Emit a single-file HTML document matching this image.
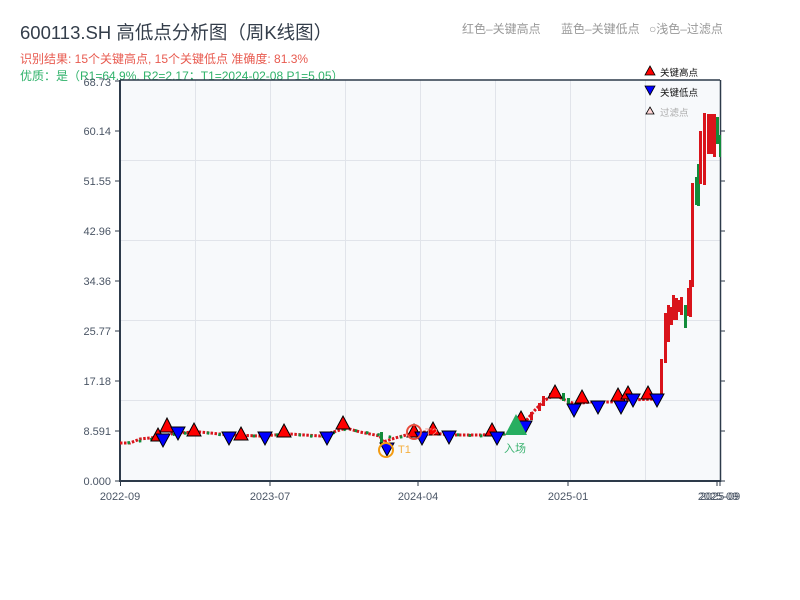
<!DOCTYPE html>
<html><head><meta charset="utf-8"><style>
html,body{margin:0;padding:0;background:#fff;width:800px;height:600px;overflow:hidden}
svg{display:block;font-family:"Liberation Sans","Noto Sans CJK SC",sans-serif}
</style></head><body>
<svg width="800" height="600" viewBox="0 0 800 600" xmlns="http://www.w3.org/2000/svg">
<text x="20" y="39" font-size="18.5" fill="#333d4a">600113.SH 高低点分析图（周K线图）</text>
<text x="20" y="63" font-size="12" fill="#e85a4f">识别结果: 15个关键高点, 15个关键低点  准确度: 81.3%</text>
<text x="20" y="80" font-size="12" fill="#2fb26a">优质：是（R1=64.9%, R2=2.17；T1=2024-02-08 P1=5.05）</text>
<text x="462" y="33" font-size="12" fill="#999">红色–关键高点</text>
<text x="561" y="33" font-size="12" fill="#999">蓝色–关键低点</text>
<text x="649" y="33" font-size="12" fill="#999">○浅色–过滤点</text>

<rect x="120" y="80" width="600" height="401" fill="#f7f9fb"/>
<g stroke="#e1e4ea" stroke-width="1">
<line x1="120" y1="160.5" x2="720" y2="160.5"/><line x1="120" y1="240.5" x2="720" y2="240.5"/>
<line x1="120" y1="320.5" x2="720" y2="320.5"/><line x1="120" y1="400.5" x2="720" y2="400.5"/>
<line x1="195.5" y1="80" x2="195.5" y2="481"/><line x1="270.5" y1="80" x2="270.5" y2="481"/>
<line x1="345.5" y1="80" x2="345.5" y2="481"/><line x1="420.5" y1="80" x2="420.5" y2="481"/>
<line x1="495.5" y1="80" x2="495.5" y2="481"/><line x1="570.5" y1="80" x2="570.5" y2="481"/>
<line x1="645.5" y1="80" x2="645.5" y2="481"/>
</g>
<g stroke="#2d3a4a" stroke-width="2" fill="none">
<line x1="120" y1="80" x2="720" y2="80" stroke-width="1.5"/>
<line x1="120" y1="80" x2="120" y2="482"/>
<line x1="119" y1="481" x2="721" y2="481"/>
<line x1="720.5" y1="80" x2="720.5" y2="482" stroke-width="1.5"/>
</g>
<g stroke="#2d3a4a" stroke-width="1">
<line x1="115" y1="81" x2="120" y2="81"/><line x1="115" y1="131" x2="120" y2="131"/><line x1="115" y1="181" x2="120" y2="181"/>
<line x1="115" y1="231" x2="120" y2="231"/><line x1="115" y1="281" x2="120" y2="281"/><line x1="115" y1="331" x2="120" y2="331"/>
<line x1="115" y1="381" x2="120" y2="381"/><line x1="115" y1="431" x2="120" y2="431"/><line x1="115" y1="481" x2="120" y2="481"/>
<line x1="720" y1="131" x2="725" y2="131"/><line x1="720" y1="181" x2="725" y2="181"/><line x1="720" y1="231" x2="725" y2="231"/>
<line x1="720" y1="281" x2="725" y2="281"/><line x1="720" y1="331" x2="725" y2="331"/><line x1="720" y1="381" x2="725" y2="381"/>
<line x1="720" y1="431" x2="725" y2="431"/><line x1="720" y1="481" x2="725" y2="481"/>
<line x1="120.5" y1="481" x2="120.5" y2="486"/><line x1="270" y1="481" x2="270" y2="486"/><line x1="418" y1="481" x2="418" y2="486"/>
<line x1="568" y1="481" x2="568" y2="486"/><line x1="717" y1="481" x2="717" y2="486"/><line x1="720" y1="481" x2="720" y2="486"/>
</g>
<g font-size="11" fill="#4a5565" text-anchor="end">
<text x="111" y="86">68.73</text><text x="111" y="135">60.14</text><text x="111" y="185">51.55</text>
<text x="111" y="235">42.96</text><text x="111" y="285">34.36</text><text x="111" y="335">25.77</text>
<text x="111" y="385">17.18</text><text x="111" y="435">8.591</text><text x="111" y="485">0.000</text>
</g>
<g font-size="11" fill="#4a5565" text-anchor="middle">
<text x="120" y="500">2022-09</text><text x="270" y="500">2023-07</text><text x="418" y="500">2024-04</text>
<text x="568" y="500">2025-01</text><text x="718" y="500">2025-09</text><text x="720" y="500">2025-09</text>
</g>

<path d="M120 443 L130 443 L140 439 L160 437 L175 433 L200 432 L230 435 L260 436 L290 434 L320 436 L340 430 L346 428 L360 432 L380 436 L383 442 L395 438 L410 434 L425 432 L450 435 L480 435 L505 434 L515 430 L525 422 L535 410 L545 400 L555 395 L565 400 L575 404 L590 402 L610 402 L630 400 L655 399" fill="none" stroke="#d9141b" stroke-width="3" stroke-dasharray="2.5 1.5"/>
<path d="M120 444 L160 438 L175 434 L200 432 L230 436 L260 436 L290 434 L320 437 L346 429 L380 435 L395 438 L425 433 L480 436 L505 434" fill="none" stroke="#118b3a" stroke-width="3" stroke-dasharray="2.5 9" stroke-dashoffset="4"/>
<g fill="#d9141b">
<rect x="380" y="432" width="3" height="12" fill="#118b3a"/>
<rect x="530" y="412" width="3" height="8"/><rect x="538" y="403" width="3" height="8"/><rect x="542" y="396" width="3" height="10"/>
<rect x="549" y="393" width="3" height="5"/><rect x="562" y="393" width="3" height="8" fill="#118b3a"/>
<rect x="567" y="398" width="3" height="6" fill="#118b3a"/>
<rect x="660" y="359" width="3" height="38"/><rect x="664" y="313" width="3" height="50"/>
<rect x="667" y="305" width="3" height="37"/><rect x="670" y="307" width="3" height="18"/><rect x="672" y="295" width="3" height="25"/>
<rect x="675" y="298" width="3" height="22"/><rect x="678" y="300" width="3" height="12"/>
<rect x="680" y="297" width="3" height="18"/><rect x="684" y="305" width="3" height="23" fill="#118b3a"/>
<rect x="687" y="288" width="3" height="28"/><rect x="689" y="280" width="3" height="37"/>
<rect x="691" y="183" width="3" height="104"/><rect x="695" y="177" width="3" height="28" fill="#118b3a"/>
<rect x="697" y="164" width="3" height="42" fill="#118b3a"/><rect x="699" y="131" width="3" height="53"/>
<rect x="703" y="113" width="3" height="72"/><rect x="707" y="114" width="3" height="40"/>
<rect x="710" y="114" width="3" height="40"/><rect x="713" y="114" width="3" height="43"/>
<rect x="716" y="117" width="3" height="27" fill="#118b3a"/><rect x="719" y="135" width="2" height="22" fill="#118b3a"/>
</g>

<g fill="#ff0000" stroke="#000" stroke-width="1">
<path d="M158 428 L165 441 L151 441Z"/><path d="M167 418 L174 432 L160 432Z"/><path d="M194 423 L201 436 L187 436Z"/>
<path d="M241 427 L248 440 L234 440Z"/><path d="M284 424 L291 437 L277 437Z"/><path d="M343 416 L350 429 L336 429Z"/>
<path d="M414 424 L421 437 L407 437Z"/><path d="M433 422 L440 435 L426 435Z"/><path d="M492 423 L499 436 L485 436Z"/>
<path d="M521 411 L528 424 L514 424Z"/><path d="M555 385 L562 398 L548 398Z"/><path d="M582 390 L589 403 L575 403Z"/>
<path d="M618 388 L625 401 L611 401Z"/><path d="M628 386 L635 399 L621 399Z"/><path d="M648 386 L655 399 L641 399Z"/>
</g>
<g fill="#0000ff" stroke="#000" stroke-width="1">
<path d="M156 434 L170 434 L163 447Z"/><path d="M171 427 L185 427 L178 440Z"/><path d="M222 432 L236 432 L229 445Z"/>
<path d="M258 432 L272 432 L265 445Z"/><path d="M320 432 L334 432 L327 445Z"/><path d="M380 443 L394 443 L387 456Z"/>
<path d="M415 432 L429 432 L422 445Z"/><path d="M442 431 L456 431 L449 444Z"/><path d="M490 432 L504 432 L497 445Z"/>
<path d="M518 421 L532 421 L525 434Z"/><path d="M567 404 L581 404 L574 417Z"/><path d="M591 401 L605 401 L598 414Z"/>
<path d="M614 401 L628 401 L621 414Z"/><path d="M626 394 L640 394 L633 407Z"/><path d="M650 394 L664 394 L657 407Z"/>
</g>
<path d="M516 414 L527 435 L505 435Z" fill="#27ae60"/>
<text x="504" y="452" font-size="11" fill="#3cb371">入场</text>
<circle cx="386" cy="450" r="7" fill="none" stroke="#f39c12" stroke-width="2"/>
<text x="398" y="453" font-size="11" fill="#f5b041">T1</text>
<circle cx="414" cy="432" r="7" fill="none" stroke="#e74c3c" stroke-width="2"/>
<text x="425" y="436" font-size="11" fill="#f1948a">T2</text>

<path d="M650 66 L655 75 L645 75Z" fill="#ff0000" stroke="#000" stroke-width="0.8"/>
<text x="660" y="76" font-size="9.5" fill="#111">关键高点</text>
<path d="M645 86 L655 86 L650 95Z" fill="#0000ff" stroke="#000" stroke-width="0.8"/>
<text x="660" y="96" font-size="9.5" fill="#111">关键低点</text>
<path d="M650 107 L654 114 L646 114Z" fill="#ffd6d6" stroke="#000" stroke-width="0.8"/>
<text x="660" y="116" font-size="9.5" fill="#aaa">过滤点</text>
</svg>
</body></html>
